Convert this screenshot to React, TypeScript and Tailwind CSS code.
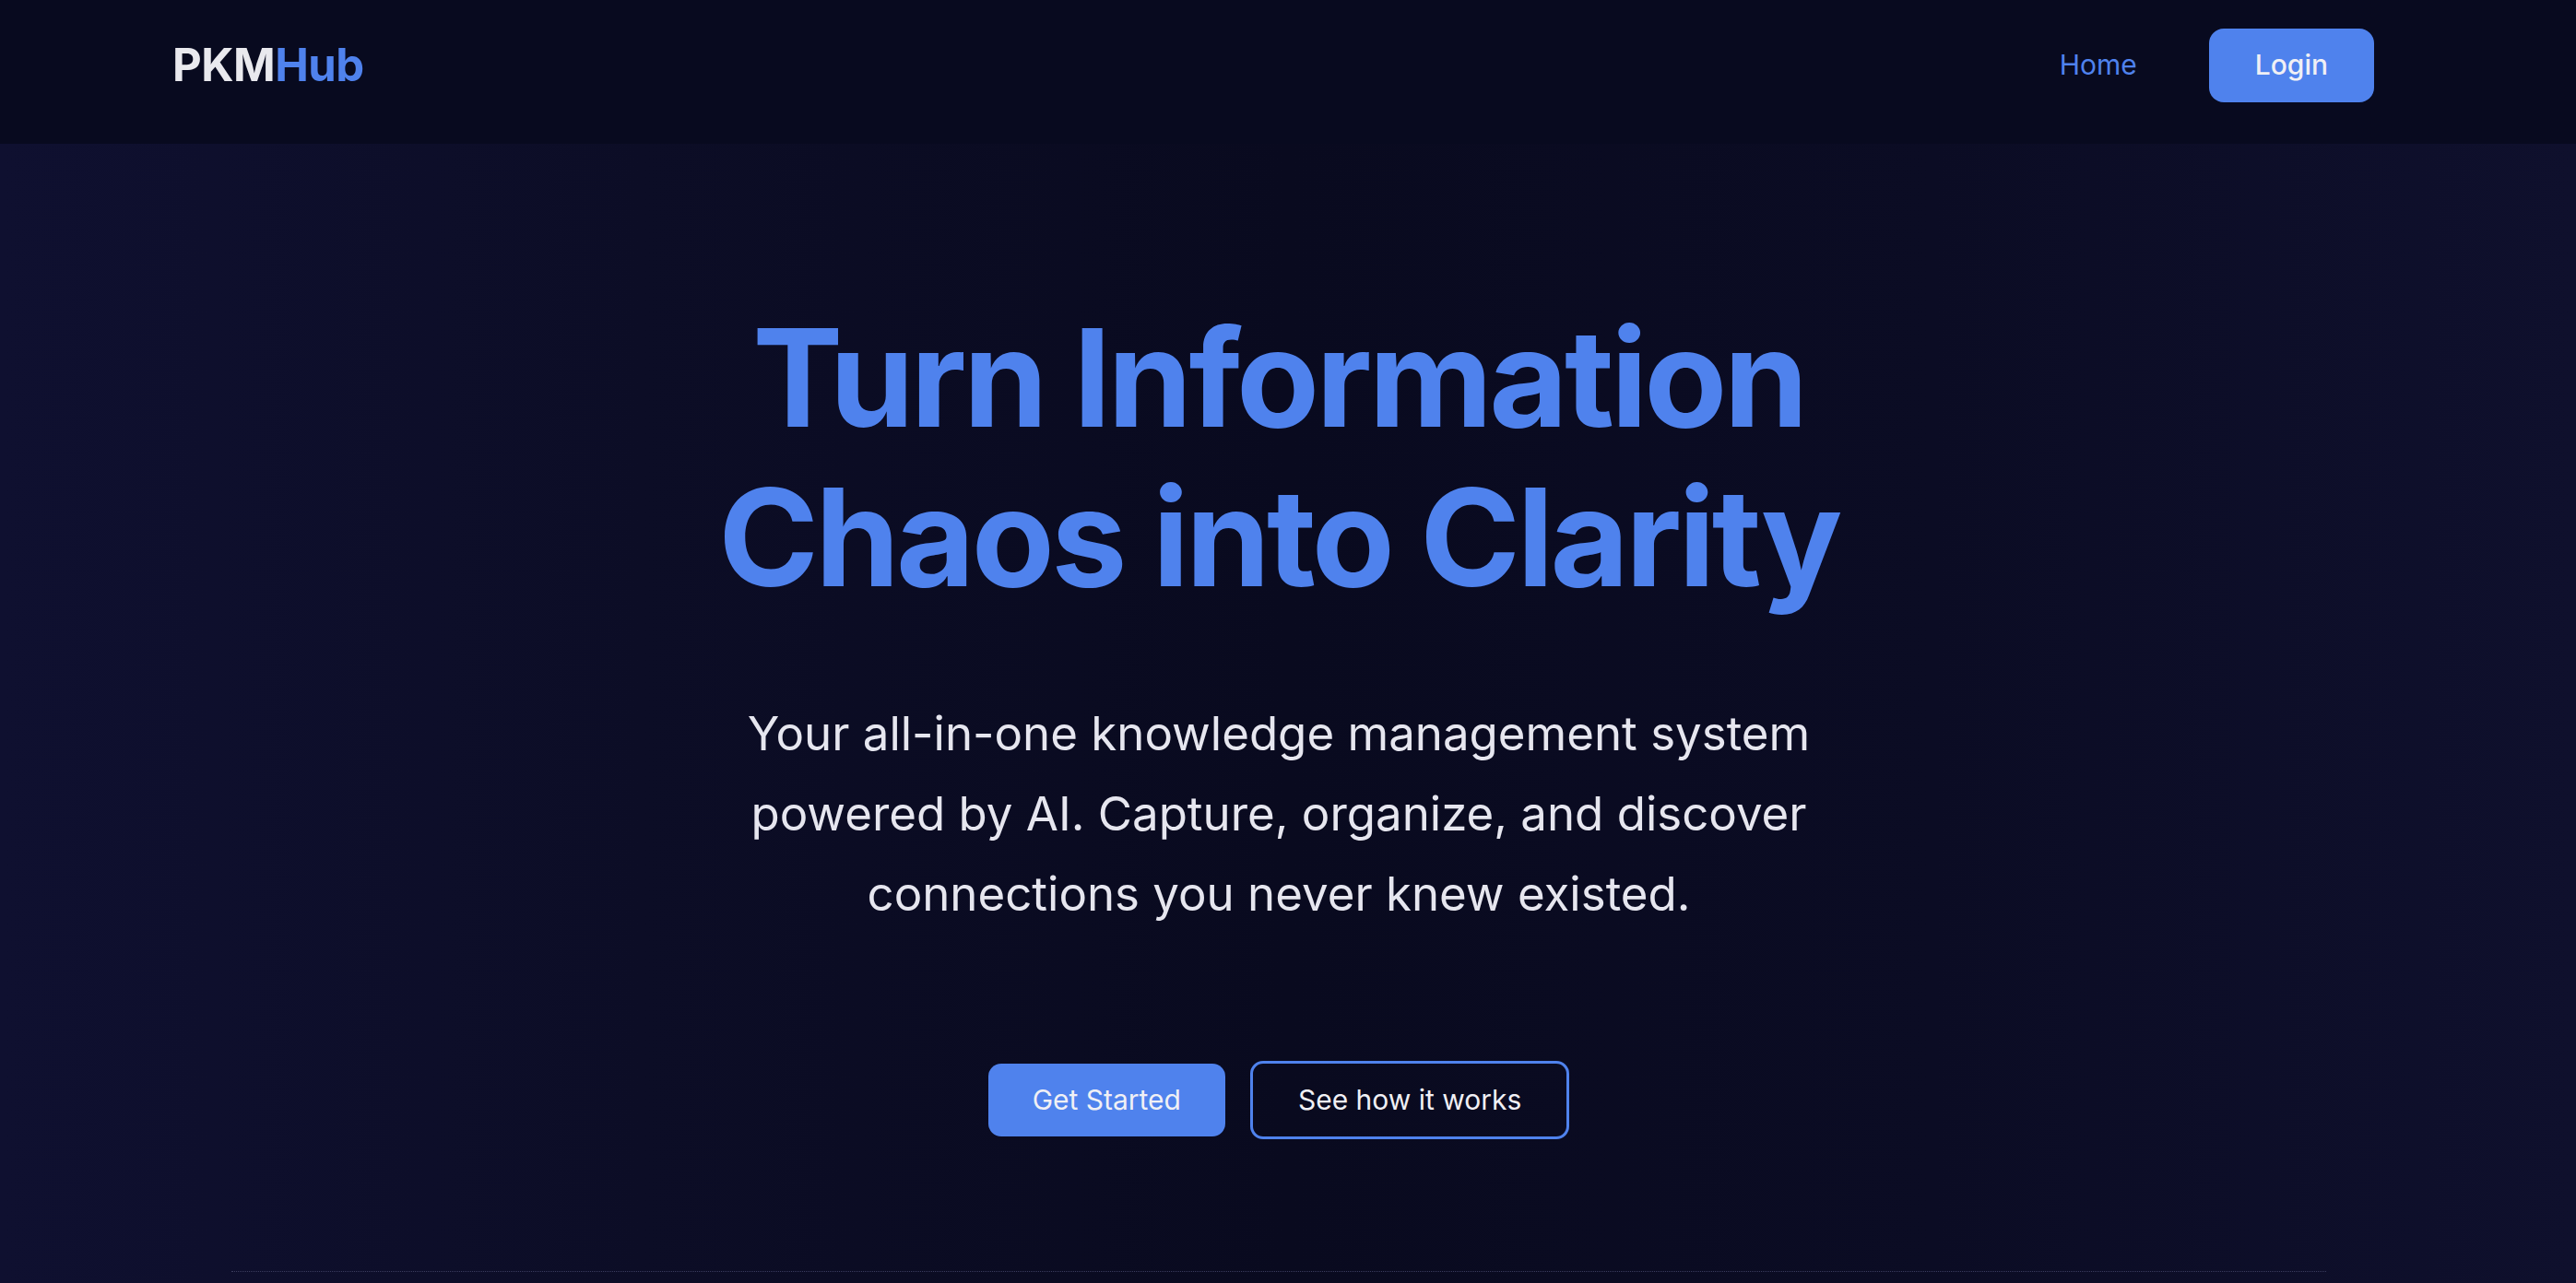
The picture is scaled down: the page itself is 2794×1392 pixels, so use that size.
export default function App() {
  return (
    <div
      className="min-h-screen w-full bg-[linear-gradient(90deg,#0f1030_0%,#0c0d26_25%,#090a1f_50%,#0b0c24_75%,#0f102d_100%)] text-[#e7e7ef]"
      style={{ fontFamily: 'Inter, "Noto Sans", sans-serif' }}
    >
      <nav className="flex h-[156px] items-center justify-between bg-[#080a1f] pb-[15px] pl-[187px] pr-[219px]">
        <a href="#" className="text-[49px] font-bold leading-none tracking-[-0.01em]">
          <span className="text-[#e9e9ee]">PKM</span>
          <span className="text-[#4f82ed]">Hub</span>
        </a>
        <div className="flex items-center gap-[78px]">
          <a href="#" className="text-[30px] text-[#4f82ed]">
            Home
          </a>
          <button className="flex h-[80px] items-center rounded-[16px] bg-[#4f82ed] px-[50px] text-[30px] font-medium text-[#f0f0f5]">
            Login
          </button>
        </div>
      </nav>

      <main className="flex flex-col items-center pr-[20px] pt-[167px]">
        <h1 className="text-center text-[147px] font-bold leading-[173px] tracking-[-0.025em] text-[#4f82ed]">
          Turn Information
          <br />
          Chaos into Clarity
        </h1>

        <p className="mt-[83px] text-center text-[51px] leading-[87px] text-[#e6e6ef]">
          Your all-in-one knowledge management system
          <br />
          powered by AI. Capture, organize, and discover
          <br />
          connections you never knew existed.
        </p>

        <div className="mt-[138px] flex items-center gap-[27px]">
          <button className="flex h-[79px] items-center rounded-[14px] bg-[#4f82ed] px-[48px] text-[30px] text-[#f0f0f5]">
            Get Started
          </button>
          <button className="flex h-[85px] items-center rounded-[14px] border-[3px] border-[#4f82ed] px-[49px] text-[30px] text-[#f0f0f5]">
            See how it works
          </button>
        </div>

        <div className="mt-[143px] w-[2272px] border-t border-dotted border-[#3b3c5e]" />
      </main>
    </div>
  )
}
